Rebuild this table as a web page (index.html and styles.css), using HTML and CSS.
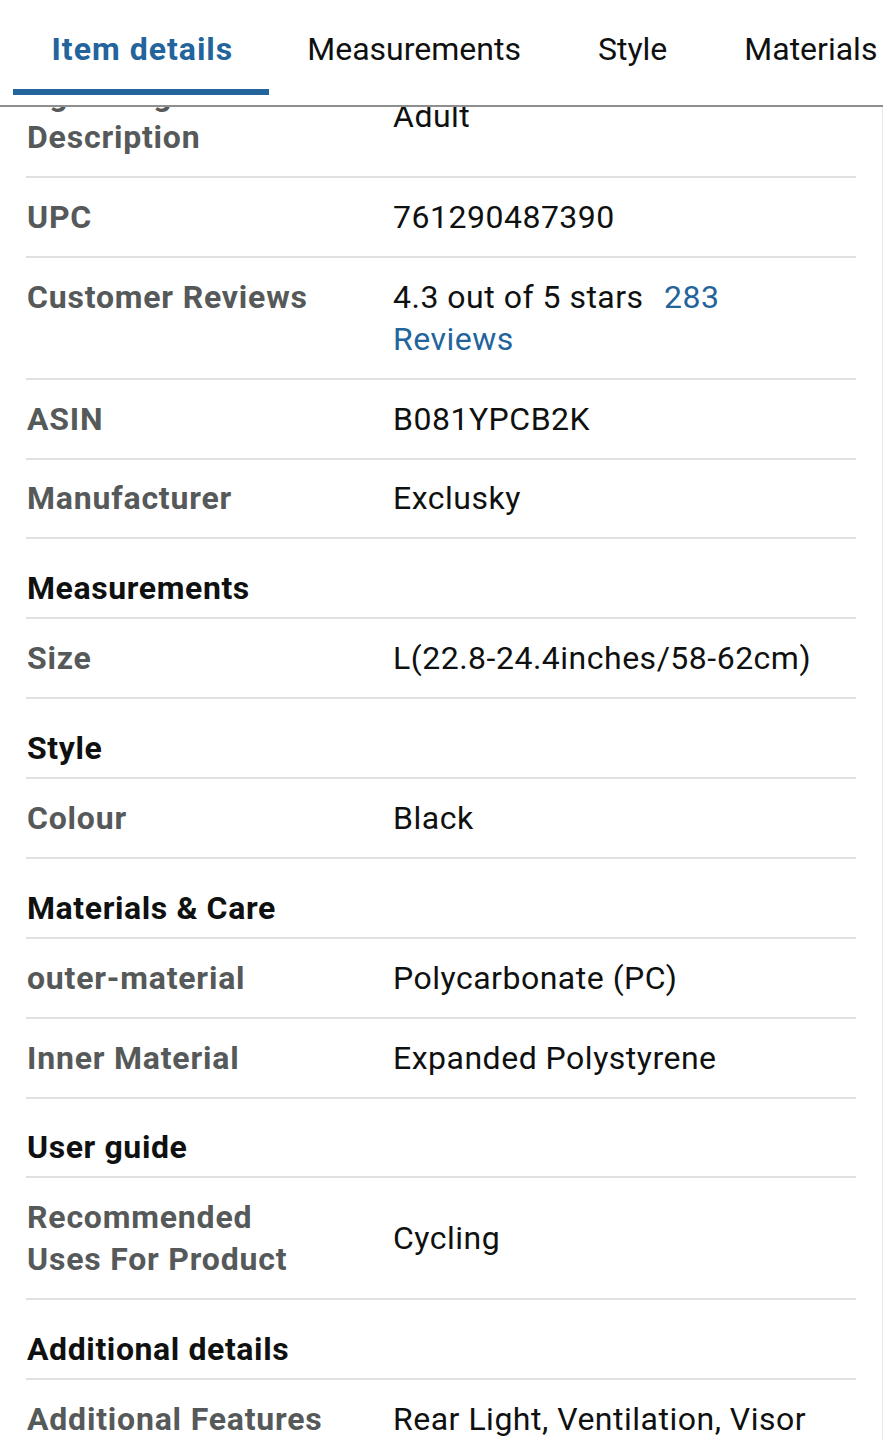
FILE: index.html
```html
<!DOCTYPE html>
<html lang="en">
<head>
<meta charset="utf-8">
<title>Item details</title>
<link rel="stylesheet" href="styles.css">
</head>
<body>
<div class="page">
  <nav class="tabs">
    <div class="tab active">Item details</div>
    <div class="tab">Measurements</div>
    <div class="tab">Style</div>
    <div class="tab">Materials &amp; Care</div>
  </nav>
  <div class="viewport">
    <div class="list">
      <div class="row">
        <div class="label">Age Range Description</div>
        <div class="value">Adult</div>
      </div>
      <div class="row">
        <div class="label">UPC</div>
        <div class="value">761290487390</div>
      </div>
      <div class="row top">
        <div class="label">Customer Reviews</div>
        <div class="value">4.3 out of 5 stars <a class="link">283 Reviews</a></div>
      </div>
      <div class="row">
        <div class="label">ASIN</div>
        <div class="value">B081YPCB2K</div>
      </div>
      <div class="row">
        <div class="label">Manufacturer</div>
        <div class="value">Exclusky</div>
      </div>
      <div class="row section"><div class="heading">Measurements</div></div>
      <div class="row">
        <div class="label">Size</div>
        <div class="value">L(22.8-24.4inches/58-62cm)</div>
      </div>
      <div class="row section"><div class="heading">Style</div></div>
      <div class="row">
        <div class="label">Colour</div>
        <div class="value">Black</div>
      </div>
      <div class="row section"><div class="heading">Materials &amp; Care</div></div>
      <div class="row">
        <div class="label">outer-material</div>
        <div class="value">Polycarbonate (PC)</div>
      </div>
      <div class="row">
        <div class="label">Inner Material</div>
        <div class="value">Expanded Polystyrene</div>
      </div>
      <div class="row section"><div class="heading">User guide</div></div>
      <div class="row">
        <div class="label">Recommended Uses For Product</div>
        <div class="value">Cycling</div>
      </div>
      <div class="row section"><div class="heading">Additional details</div></div>
      <div class="row">
        <div class="label">Additional Features</div>
        <div class="value">Rear Light, Ventilation, Visor</div>
      </div>
      <div class="row">
        <div class="label">Item Weight</div>
        <div class="value">300 Grams</div>
      </div>
    </div>
  </div>
</div>
</body>
</html>
```

FILE: styles.css
```css
html, body {
  margin: 0;
  padding: 0;
  background: #ffffff;
}
body {
  font-family: Roboto, "Noto Sans", "Liberation Sans", sans-serif;
  font-size: 32px;
  line-height: 42px;
  color: #0f1111;
}
.page {
  width: 883px;
  height: 1440px;
  overflow: hidden;
  display: flex;
  flex-direction: column;
}
.tabs {
  flex: none;
  display: flex;
  white-space: nowrap;
  overflow: hidden;
  padding-left: 13px;
  padding-bottom: 10px;
  border-bottom: 2px solid #8f8f8f;
}
.tab {
  flex: none;
  padding: 28px 38.5px 19px 38.5px;
  border-bottom: 6px solid transparent;
  color: #0f1111;
}
.tab.active {
  color: #23649c;
  font-weight: 700;
  letter-spacing: 1px;
  padding-left: 38.5px;
  padding-right: 35.5px;
  border-bottom-color: #23649c;
}
.viewport {
  flex: 1;
  overflow: hidden;
  border-right: 1px solid #e6e6e6;
  padding: 0 26px;
}
.list {
  margin-top: -51px;
}
.row {
  display: flex;
  align-items: center;
  padding: 17.95px 0;
  border-bottom: 2px solid #e1e1e1;
}
.row.top {
  align-items: flex-start;
}
.row.section {
  padding: 27.95px 0 7.95px 0;
}
.label {
  flex: none;
  width: 367px;
  padding-left: 1px;
  padding-right: 66px;
  box-sizing: border-box;
  font-weight: 700;
  letter-spacing: 0.8px;
  color: #565959;
}
.value {
  max-width: 430px;
  letter-spacing: 0.5px;
  color: #0f1111;
}
.link {
  color: #23649c;
  margin-left: 12px;
  text-decoration: none;
}
.heading {
  font-weight: 700;
  letter-spacing: 0.6px;
  color: #0f1111;
  padding-left: 1px;
}
```
